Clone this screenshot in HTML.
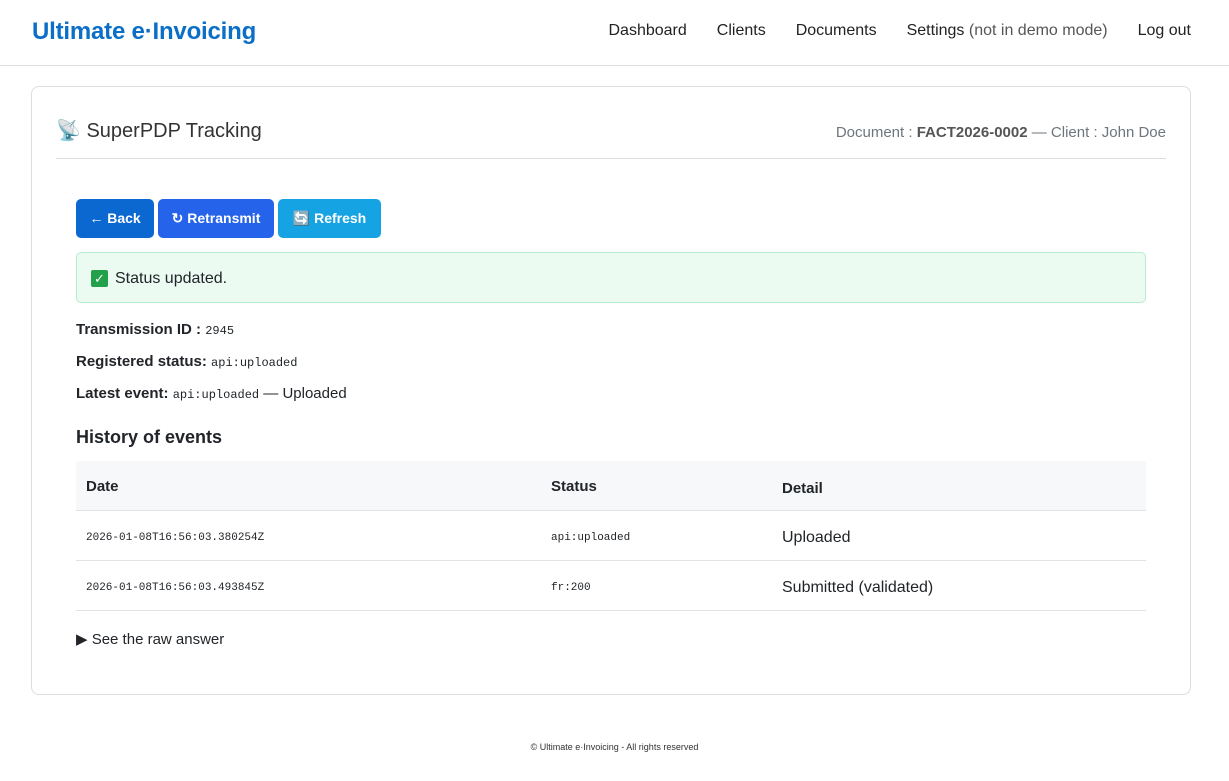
<!DOCTYPE html>
<html><head><meta charset="utf-8"><style>
*{box-sizing:border-box;margin:0;padding:0}
body{width:1229px;height:781px;background:#fff;font-family:"Liberation Sans",sans-serif;color:#212529;position:relative;overflow:hidden}
.hdr{height:66px;border-bottom:1px solid #dcdcdc;position:relative}
.logo{position:absolute;left:32px;top:18px;font-size:24px;font-weight:bold;color:#0b6fc7;letter-spacing:-0.2px}
.nav{position:absolute;right:38px;top:22px;font-size:16px;color:#222}
.nav span{margin-left:30px}
.nav .g{color:#555}
.card{position:absolute;left:31px;top:86px;width:1160px;height:609px;border:1px solid #ddd;border-radius:8px}
.title{position:absolute;left:24px;top:31px;font-size:20px;color:#333}
.meta{position:absolute;right:24px;top:37px;font-size:15px;color:#6c757d}
.meta b{color:#555}
.hr{position:absolute;left:24px;right:24px;top:71px;border-top:1px solid #ddd}
.btn{position:absolute;top:112px;height:39px;border-radius:5px;color:#fff;font-weight:bold;font-size:14px;line-height:39px;text-align:center}
.alert{position:absolute;left:44px;top:165px;width:1070px;height:51px;background:#ebfbf2;border:1px solid #b8eccf;border-radius:5px;font-size:16px;line-height:51px;padding-left:38px}
.chk{position:absolute;left:14px;top:17px;width:17px;height:17px;background:#22a04a;border-radius:2px;color:#fff;font-size:13px;line-height:17px;text-align:center}
.f{position:absolute;left:44px;font-size:15px}
code{font-family:"Liberation Mono",monospace;font-size:12px}
.h{position:absolute;left:44px;top:340px;font-size:18px;font-weight:bold}
.tbl{position:absolute;left:44px;top:374px;width:1070px}
.row{position:relative;height:50px;border-bottom:1px solid #e3e3e3}
.row div{position:absolute}
</style></head><body>
<div class="hdr"><div class="logo">Ultimate e·Invoicing</div>
<div class="nav"><span>Dashboard</span><span>Clients</span><span>Documents</span><span>Settings <span class="g" style="margin:0">(not in demo mode)</span></span><span>Log out</span></div></div>
<div class="card">
<div class="title">📡 SuperPDP Tracking</div>
<div class="meta">Document : <b>FACT2026-0002</b> — Client : John Doe</div>
<div class="hr"></div>
<div class="btn" style="left:44px;width:78px;background:#0a68d0">← Back</div>
<div class="btn" style="left:126px;width:116px;background:#2563eb">↻ Retransmit</div>
<div class="btn" style="left:246px;width:103px;background:#16a3e3">🔄 Refresh</div>
<div class="alert"><div class="chk">✓</div>Status updated.</div>
<div class="f" style="top:234px"><b>Transmission ID :</b> <code>2945</code></div>
<div class="f" style="top:266px"><b>Registered status:</b> <code>api:uploaded</code></div>
<div class="f" style="top:298px"><b>Latest event:</b> <code>api:uploaded</code> — Uploaded</div>
<div class="h">History of events</div>
<div class="tbl">
<div class="row" style="background:#f7f8f9;font-weight:bold;font-size:15px"><div style="left:10px;top:17px">Date</div><div style="left:475px;top:17px">Status</div><div style="left:706px;top:19px">Detail</div></div>
<div class="row"><div style="left:10px;top:16px"><code style="font-size:11px">2026-01-08T16:56:03.380254Z</code></div><div style="left:475px;top:16px"><code style="font-size:11px">api:uploaded</code></div><div style="left:706px;top:18px;font-size:16px">Uploaded</div></div>
<div class="row"><div style="left:10px;top:16px"><code style="font-size:11px">2026-01-08T16:56:03.493845Z</code></div><div style="left:475px;top:16px"><code style="font-size:11px">fr:200</code></div><div style="left:706px;top:18px;font-size:16px">Submitted (validated)</div></div>
</div>
<div class="f" style="top:543px">▶ See the raw answer</div>
</div>
<div style="position:absolute;top:742px;width:100%;text-align:center;font-size:9px;color:#333">© Ultimate e·Invoicing - All rights reserved</div>
</body></html>
